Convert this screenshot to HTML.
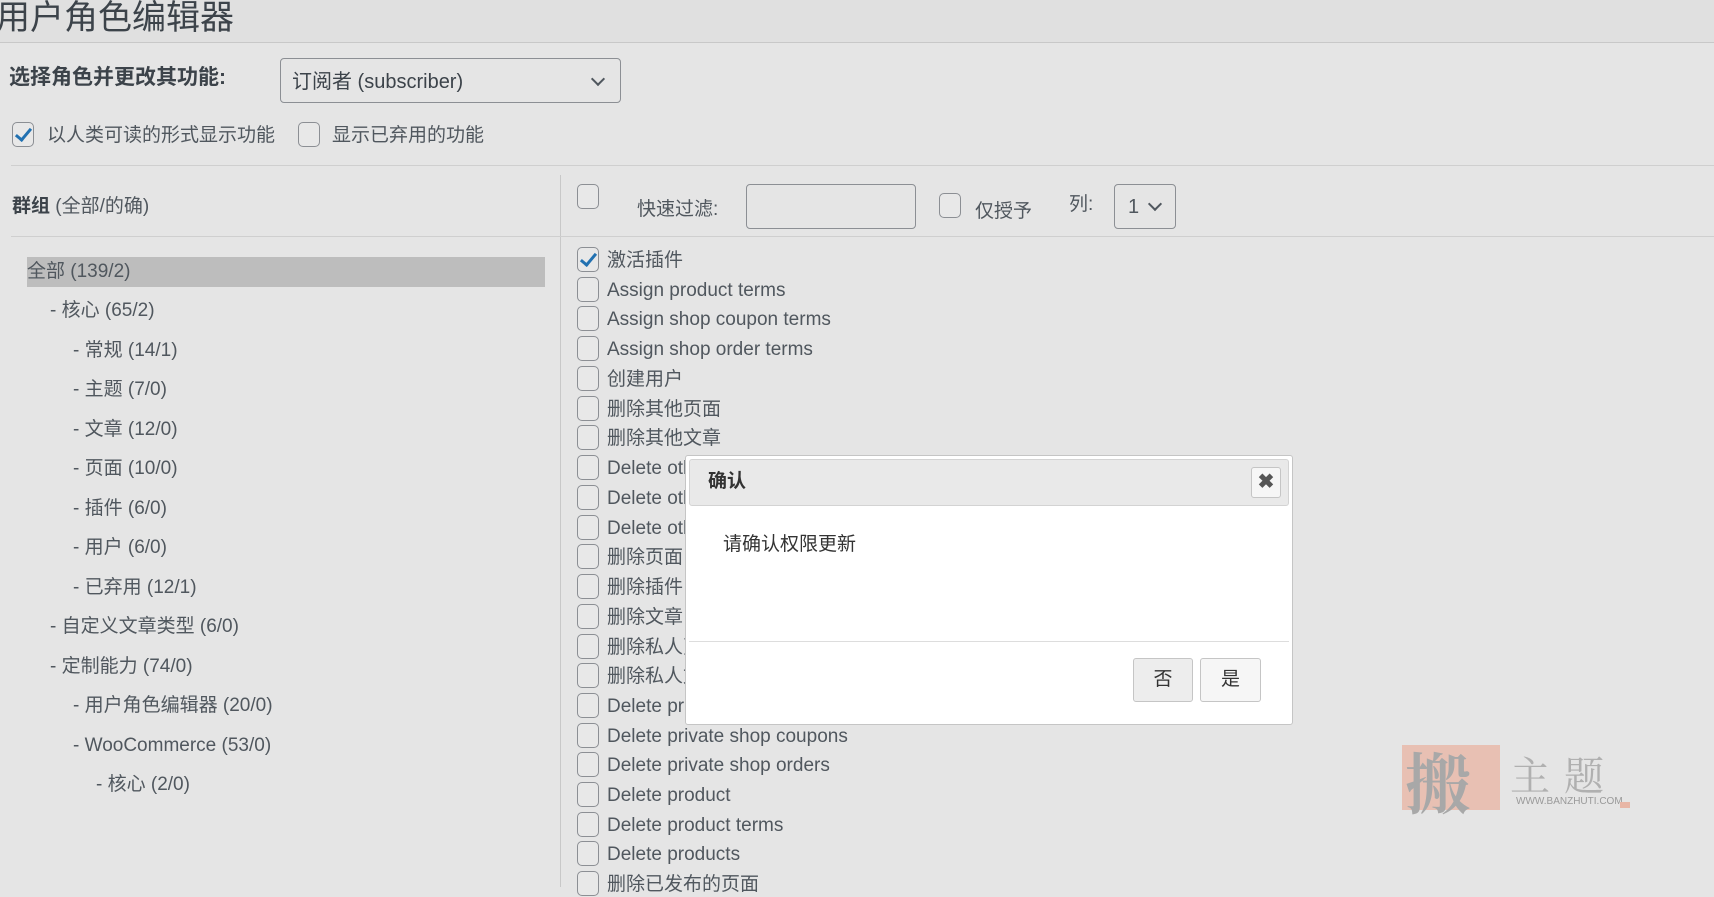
<!DOCTYPE html>
<html><head><meta charset="utf-8"><style>
*{margin:0;padding:0;box-sizing:border-box}
body{width:1714px;height:887px;overflow:hidden;background:#e5e5e5;font-family:"Liberation Sans","Noto Sans CJK SC",sans-serif;color:#50575e;position:relative;font-size:19px;line-height:24px}
.a{position:absolute;white-space:nowrap;line-height:24px}
.cb{position:absolute;width:22px;height:25px;border:1.5px solid #8c8f94;border-radius:5px;background:#e8e8e8}
.ck::after{content:"";position:absolute;left:6px;top:2px;width:6px;height:13px;border:solid #2271b1;border-width:0 3px 3px 0;transform:rotate(40deg)}
.chev{position:absolute;width:10px;height:10px;border:solid #50575e;border-width:0 2px 2px 0;transform:rotate(45deg)}
.tr{position:absolute;white-space:nowrap;font-size:19px;line-height:24px}
.cap{position:absolute;left:577px;white-space:nowrap;height:26px}
.cap span{position:absolute;left:30px;top:2px;font-size:19px;line-height:24px}
</style></head><body>
<div class="a" style="left:0;top:0;width:1714px;height:43px;background:#e0e0e0;border-bottom:1px solid #c8c8c8"></div>
<div class="a" style="left:-4px;top:0px;font-size:34px;line-height:36px;color:#3c434a">用户角色编辑器</div>
<div class="a" style="left:9px;top:66px;font-size:21px;font-weight:bold;color:#3c434a">选择角色并更改其功能:</div>
<div class="a" style="left:280px;top:58px;width:341px;height:45px;border:1px solid #8c8f94;border-radius:4px"></div>
<div class="a" style="left:292px;top:70px;font-size:20px;color:#3c434a">订阅者 (subscriber)</div>
<div class="chev" style="left:593px;top:74px"></div>
<div class="cb ck" style="left:12px;top:122px"></div>
<div class="a" style="left:47px;top:124px;font-size:19px">以人类可读的形式显示功能</div>
<div class="cb" style="left:298px;top:122px"></div>
<div class="a" style="left:332px;top:124px;font-size:19px">显示已弃用的功能</div>
<div class="a" style="left:11px;top:165px;width:1703px;height:1px;background:#cfcfcf"></div>
<div class="a" style="left:560px;top:175px;width:1px;height:712px;background:#c8c8c8"></div>
<div class="a" style="left:11px;top:236px;width:1703px;height:1px;background:#cfcfcf"></div>
<div class="a" style="left:12px;top:195px;font-size:19px"><b style="color:#3c434a">群组</b> (全部/的确)</div>
<div class="cb" style="left:577px;top:184px"></div>
<div class="a" style="left:637px;top:198px">快速过滤:</div>
<div class="a" style="left:746px;top:184px;width:170px;height:45px;border:1px solid #8c8f94;border-radius:4px"></div>
<div class="cb" style="left:939px;top:193px"></div>
<div class="a" style="left:975px;top:200px">仅授予</div>
<div class="a" style="left:1069px;top:193px">列:</div>
<div class="a" style="left:1114px;top:184px;width:62px;height:45px;border:1px solid #8c8f94;border-radius:4px"></div>
<div class="a" style="left:1128px;top:195px;font-size:20px">1</div>
<div class="chev" style="left:1150px;top:199px"></div>
<div class="a" style="left:27px;top:257px;width:518px;height:30px;background:#bdbdbd"></div>
<div class="tr" style="left:27px;top:260px">全部 (139/2)</div>
<div class="tr" style="left:50px;top:299px">- 核心 (65/2)</div>
<div class="tr" style="left:73px;top:339px">- 常规 (14/1)</div>
<div class="tr" style="left:73px;top:378px">- 主题 (7/0)</div>
<div class="tr" style="left:73px;top:418px">- 文章 (12/0)</div>
<div class="tr" style="left:73px;top:457px">- 页面 (10/0)</div>
<div class="tr" style="left:73px;top:497px">- 插件 (6/0)</div>
<div class="tr" style="left:73px;top:536px">- 用户 (6/0)</div>
<div class="tr" style="left:73px;top:576px">- 已弃用 (12/1)</div>
<div class="tr" style="left:50px;top:615px">- 自定义文章类型 (6/0)</div>
<div class="tr" style="left:50px;top:655px">- 定制能力 (74/0)</div>
<div class="tr" style="left:73px;top:694px">- 用户角色编辑器 (20/0)</div>
<div class="tr" style="left:73px;top:734px">- WooCommerce (53/0)</div>
<div class="tr" style="left:96px;top:773px">- 核心 (2/0)</div>

<div class="cap" style="top:247px"><div class="cb ck" style="left:0;top:0"></div><span>激活插件</span></div>
<div class="cap" style="top:277px"><div class="cb" style="left:0;top:0"></div><span>Assign product terms</span></div>
<div class="cap" style="top:306px"><div class="cb" style="left:0;top:0"></div><span>Assign shop coupon terms</span></div>
<div class="cap" style="top:336px"><div class="cb" style="left:0;top:0"></div><span>Assign shop order terms</span></div>
<div class="cap" style="top:366px"><div class="cb" style="left:0;top:0"></div><span>创建用户</span></div>
<div class="cap" style="top:396px"><div class="cb" style="left:0;top:0"></div><span>删除其他页面</span></div>
<div class="cap" style="top:425px"><div class="cb" style="left:0;top:0"></div><span>删除其他文章</span></div>
<div class="cap" style="top:455px"><div class="cb" style="left:0;top:0"></div><span>Delete others</span></div>
<div class="cap" style="top:485px"><div class="cb" style="left:0;top:0"></div><span>Delete others</span></div>
<div class="cap" style="top:515px"><div class="cb" style="left:0;top:0"></div><span>Delete others</span></div>
<div class="cap" style="top:544px"><div class="cb" style="left:0;top:0"></div><span>删除页面</span></div>
<div class="cap" style="top:574px"><div class="cb" style="left:0;top:0"></div><span>删除插件</span></div>
<div class="cap" style="top:604px"><div class="cb" style="left:0;top:0"></div><span>删除文章</span></div>
<div class="cap" style="top:634px"><div class="cb" style="left:0;top:0"></div><span>删除私人页面</span></div>
<div class="cap" style="top:663px"><div class="cb" style="left:0;top:0"></div><span>删除私人文章</span></div>
<div class="cap" style="top:693px"><div class="cb" style="left:0;top:0"></div><span>Delete private</span></div>
<div class="cap" style="top:723px"><div class="cb" style="left:0;top:0"></div><span>Delete private shop coupons</span></div>
<div class="cap" style="top:752px"><div class="cb" style="left:0;top:0"></div><span>Delete private shop orders</span></div>
<div class="cap" style="top:782px"><div class="cb" style="left:0;top:0"></div><span>Delete product</span></div>
<div class="cap" style="top:812px"><div class="cb" style="left:0;top:0"></div><span>Delete product terms</span></div>
<div class="cap" style="top:841px"><div class="cb" style="left:0;top:0"></div><span>Delete products</span></div>
<div class="cap" style="top:871px"><div class="cb" style="left:0;top:0"></div><span>删除已发布的页面</span></div>

<div class="a" style="left:685px;top:455px;width:608px;height:270px;background:#fff;border:1px solid #c5c5c5;border-radius:3px"></div>
<div class="a" style="left:689px;top:459px;width:600px;height:47px;background:#e9e9e9;border:1px solid #d3d3d3;border-radius:3px"></div>
<div class="a" style="left:708px;top:470px;font-size:19px;font-weight:bold;color:#333">确认</div>
<div class="a" style="left:1251px;top:467px;width:30px;height:31px;background:#f6f6f6;border:1px solid #c5c5c5;border-radius:3px;text-align:center;line-height:29px;font-size:20px;font-weight:bold;color:#555">✖</div>
<div class="a" style="left:723px;top:533px;font-size:19px;color:#333">请确认权限更新</div>
<div class="a" style="left:689px;top:641px;width:600px;height:1px;background:#ddd"></div>
<div class="a" style="left:1133px;top:658px;width:60px;height:44px;background:#ededed;border:1px solid #c5c5c5;border-radius:3px;text-align:center;line-height:42px;font-size:19px;color:#333">否</div>
<div class="a" style="left:1200px;top:658px;width:61px;height:44px;background:#f6f6f6;border:1px solid #c5c5c5;border-radius:3px;text-align:center;line-height:42px;font-size:19px;color:#333">是</div>

<div class="a" style="left:1402px;top:745px;width:98px;height:65px;background:#e8b6a6;opacity:.8"></div>
<div class="a" style="left:1405px;top:745px;font-size:66px;line-height:70px;font-weight:bold;color:#a8a8a8;font-family:'Noto Serif CJK SC',serif">搬</div>
<div class="a" style="left:1510px;top:752px;font-size:40px;line-height:44px;color:#b0b0b0;letter-spacing:14px;font-family:'Noto Serif CJK SC',serif">主题</div>
<div class="a" style="left:1516px;top:796px;font-size:10px;line-height:12px;color:#999">WWW.BANZHUTI.COM</div>
<div class="a" style="left:1620px;top:802px;width:10px;height:6px;background:#e8b6a6"></div>
</body></html>
